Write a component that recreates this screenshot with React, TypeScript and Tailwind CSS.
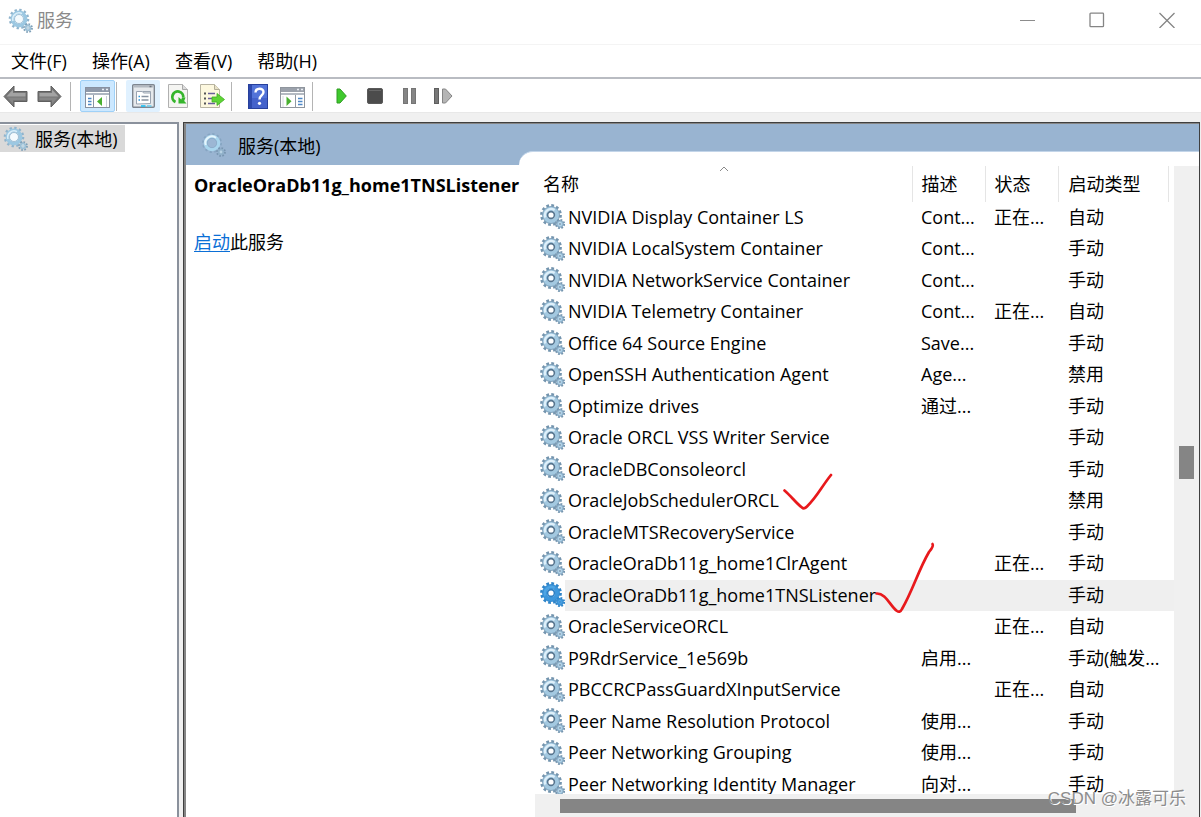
import React from 'react';

interface Service {
  name: string;
  description?: string;
  status?: string;
  startup: string;
  selected?: boolean;
}

const SERVICES: Service[] = [
  { name: 'NVIDIA Display Container LS', description: 'Cont...', status: '正在...', startup: '自动' },
  { name: 'NVIDIA LocalSystem Container', description: 'Cont...', startup: '手动' },
  { name: 'NVIDIA NetworkService Container', description: 'Cont...', startup: '手动' },
  { name: 'NVIDIA Telemetry Container', description: 'Cont...', status: '正在...', startup: '自动' },
  { name: 'Office 64 Source Engine', description: 'Save...', startup: '手动' },
  { name: 'OpenSSH Authentication Agent', description: 'Age...', startup: '禁用' },
  { name: 'Optimize drives', description: '通过...', startup: '手动' },
  { name: 'Oracle ORCL VSS Writer Service', startup: '手动' },
  { name: 'OracleDBConsoleorcl', startup: '手动' },
  { name: 'OracleJobSchedulerORCL', startup: '禁用' },
  { name: 'OracleMTSRecoveryService', startup: '手动' },
  { name: 'OracleOraDb11g_home1ClrAgent', status: '正在...', startup: '手动' },
  { name: 'OracleOraDb11g_home1TNSListener', startup: '手动', selected: true },
  { name: 'OracleServiceORCL', status: '正在...', startup: '自动' },
  { name: 'P9RdrService_1e569b', description: '启用...', startup: '手动(触发...' },
  { name: 'PBCCRCPassGuardXInputService', status: '正在...', startup: '自动' },
  { name: 'Peer Name Resolution Protocol', description: '使用...', startup: '手动' },
  { name: 'Peer Networking Grouping', description: '使用...', startup: '手动' },
  { name: 'Peer Networking Identity Manager', description: '向对...', startup: '手动' },
];

const MENUS = ['文件(F)', '操作(A)', '查看(V)', '帮助(H)'];

interface GearsProps {
  variant?: 'normal' | 'selected';
}

const GEAR_COLORS = {
  normal: { teeth: '#7394ae', ring: '#a3c9e1', edge: '#6d8ca6', light: '#dff0fa', hub: '#56758f', small: '#dff0fa' },
  selected: { teeth: '#2f84c8', ring: '#3d97dc', edge: '#2f84c8', light: '#4fa5e4', hub: '#2f7fc2', small: '#6db8ef' },
};

const Gears: React.FC<GearsProps> = ({ variant = 'normal' }) => {
  const c = GEAR_COLORS[variant];
  return (
    <svg width="25" height="25" viewBox="0 0 25 25" className="shrink-0" aria-hidden="true">
      <circle cx="11" cy="11" r="9.4" fill="none" stroke={c.teeth} strokeWidth="3" strokeDasharray="2.7 2.22" />
      <circle cx="11" cy="11" r="6.3" fill="none" stroke={c.ring} strokeWidth="4.8" />
      <circle cx="11" cy="11" r="8.5" fill="none" stroke={c.edge} strokeWidth="0.8" opacity="0.8" />
      <path d="M5.4 13.5A6.2 6.2 0 0 1 14.6 6" fill="none" stroke={c.light} strokeWidth="2.2" />
      <circle cx="11" cy="11" r="3.4" fill="#fff" stroke={c.hub} strokeWidth="1.6" />
      <circle cx="20" cy="20" r="4.1" fill="none" stroke={c.teeth} strokeWidth="2" strokeDasharray="1.8 1.42" />
      <circle cx="20" cy="20" r="2.4" fill={c.small} stroke={c.ring} strokeWidth="2" />
      <circle cx="20" cy="20" r="3.3" fill="none" stroke={c.edge} strokeWidth="0.6" />
      <circle cx="20" cy="20" r="0.9" fill={c.edge} />
    </svg>
  );
};

/* Toned down version used for the window caption and the console tree */
const SoftGears = () => (
  <svg width="25" height="25" viewBox="0 0 25 25" className="shrink-0" aria-hidden="true">
    <circle cx="11" cy="11" r="9" fill="none" stroke="#8fb3cc" strokeWidth="2.6" strokeDasharray="2.3 2.41" />
    <circle cx="11" cy="11" r="6.6" fill="none" stroke="#9cc8e2" strokeWidth="3.6" />
    <path d="M5 13A6.3 6.3 0 0 1 14 5.6" fill="none" stroke="#d9eef9" strokeWidth="1.6" />
    <circle cx="11" cy="11" r="4.5" fill="#f4fafd" stroke="#8eb4ce" strokeWidth="0.8" />
    <circle cx="20" cy="20" r="3.9" fill="none" stroke="#7fa0b8" strokeWidth="2" strokeDasharray="1.6 1.46" />
    <circle cx="20" cy="20" r="2.3" fill="#e8f4fa" stroke="#9dc0d6" strokeWidth="1.8" />
    <circle cx="20" cy="20" r="0.7" fill="#7fa0b8" />
  </svg>
);

/* Banner version, sits on the blue header */
const BannerGears = () => (
  <svg width="25" height="25" viewBox="0 0 25 25" className="shrink-0" aria-hidden="true">
    <circle cx="11" cy="10" r="9" fill="none" stroke="#86a5c2" strokeWidth="2" strokeDasharray="2.3 2.41" />
    <circle cx="11" cy="10" r="6.6" fill="none" stroke="#a9d6ee" strokeWidth="3.4" />
    <path d="M4.8 12A6.5 6.5 0 0 1 15 4.8" fill="none" stroke="#e6f6fd" strokeWidth="2" />
    <circle cx="11" cy="10" r="4.7" fill="#9cb7d4" stroke="#86a9c6" strokeWidth="0.7" />
    <circle cx="20" cy="19" r="3.9" fill="none" stroke="#7896b0" strokeWidth="2" strokeDasharray="1.6 1.46" />
    <circle cx="20" cy="19" r="2.2" fill="#b9d3e4" stroke="#8fb0c9" strokeWidth="1.6" />
  </svg>
);

const Arrow: React.FC<{ flip?: boolean }> = ({ flip }) => (
  <svg width="25" height="24" viewBox="0 0 25 24" className={flip ? '-scale-x-100' : ''} aria-hidden="true">
    <path d="M1 12.500 11 2v5.500h13v10H11V23Z" fill="#757575" stroke="#5f5f5f" strokeLinejoin="round" />
    <path d="M3.500 12.500 10 5.500V9h12.500v3.500z" fill="#a3a3a3" />
    <path d="M4.500 13.500H22.500V16H10v4Z" fill="#868686" />
  </svg>
);

const TreeIcon = () => (
  <svg width="25" height="24" viewBox="0 -3 25 24" aria-hidden="true">
    <rect x="0.5" y="0.5" width="24" height="20" fill="#fff" stroke="#8790a0" />
    <rect x="1" y="1" width="23" height="4" fill="#8f99aa" />
    <path d="M17 2.500h2M21 2.500h2" stroke="#e9edf2" strokeWidth="1.5" />
    <path d="M1 7h23" stroke="#aeb6c2" strokeWidth="2" />
    <path d="M8.500 8v13" stroke="#8a94a4" />
    <path d="M3 11.500h3.500M3 14.500h3.500M3 17.500h3.500" stroke="#4d87c7" strokeWidth="1.5" />
    <path d="M12 14.500 17 10v9Z" fill="#49b030" />
    <path d="M21.500 9v11" stroke="#c9d0da" />
  </svg>
);

const PropertiesIcon = () => (
  <svg width="23" height="24" viewBox="0 0 23 24" aria-hidden="true">
    <rect x="0.7" y="0.7" width="21.6" height="22.6" rx="1" fill="#e6e9ec" stroke="#7e8690" strokeWidth="1.4" />
    <path d="M1.500 2.500h20" stroke="#b3b9c1" strokeWidth="2" />
    <path d="M17.500 2.500h2" stroke="#6c747e" strokeWidth="1.5" />
    <path d="M4.500 20V7.500h6l1 1.500h7v10.500z" fill="#fff" stroke="#9aa4b1" />
    <path d="M11 7.500h7.500v2" fill="none" stroke="#9aa4b1" />
    <path d="M6.500 12.500h1.500M6.500 16h1.500" stroke="#2b94d6" strokeWidth="1.5" />
    <path d="M9.500 12.500h7M9.500 16h7" stroke="#8792a0" strokeWidth="1.3" />
    <path d="M9 22h4.500" stroke="#18bdf3" strokeWidth="1.6" />
    <path d="M15 22h4.500" stroke="#6ccbea" strokeWidth="1.6" />
  </svg>
);

const RefreshIcon = () => (
  <svg width="20" height="24" viewBox="0 0 20 24" aria-hidden="true">
    <path d="M0.500 0.500h14l5 5v18h-19Z" fill="#f5f5f2" stroke="#b0b0b0" />
    <path d="M14.500 0.500v5h5" fill="#dcdcdc" stroke="#a8a8a8" />
    <path d="M7.500 18A5.500 5.500 0 1 1 15.300 13.500" fill="none" stroke="#35b52b" strokeWidth="2.8" />
    <path d="M10.500 13v6.500H18.500L16.200 17 17.500 13.500H14L13.300 15.500Z" fill="#35b52b" />
  </svg>
);

const ExportIcon = () => (
  <svg width="25" height="24" viewBox="0 0 25 24" aria-hidden="true">
    <path d="M0.500 0.500h14l5 5v18h-19Z" fill="#fdf8df" stroke="#b8b4a2" />
    <path d="M14.500 0.500v5h5" fill="#e8e2c6" stroke="#b3ae98" />
    <path d="M4 9.500h2M4 14.500h2M4 19.500h2" stroke="#555" strokeWidth="1.8" />
    <path d="M8 9.500h7M8 14.500h4M8 19.500h7" stroke="#6a5f9c" strokeWidth="1.5" />
    <path d="M12 13h5V9.500l7.500 6-7.500 6V18h-5Z" fill="#5fd435" stroke="#3fae22" strokeWidth="0.8" />
  </svg>
);

const HelpIcon = () => (
  <svg width="20" height="25" viewBox="0 0 20 25" aria-hidden="true">
    <rect x="0.5" y="0.5" width="19" height="24" fill="#5273d8" stroke="#27409c" />
    <path d="M1 1h3v23H1z" fill="#2d49ad" />
    <path d="M4 14h15v10H4z" fill="#4462cb" />
    <path d="M7.500 8.500c0-5 8-5 8-.5 0 3.500-4 3.500-4 7.500" fill="none" stroke="#fff" strokeWidth="2.4" />
    <circle cx="11.5" cy="19.3" r="1.6" fill="#fff" />
  </svg>
);

const ActionPaneIcon = () => (
  <svg width="25" height="24" viewBox="0 -3 25 24" aria-hidden="true">
    <rect x="0.5" y="0.5" width="24" height="20" fill="#fff" stroke="#8f959d" />
    <rect x="1" y="1" width="23" height="4" fill="#9ba1ab" />
    <path d="M17 2.500h2M21 2.500h2" stroke="#e9edf2" strokeWidth="1.5" />
    <path d="M1 7h23" stroke="#b4bac2" strokeWidth="2" />
    <path d="M15.500 8v13" stroke="#9299a3" />
    <path d="M18 11.500h4.500M18 14.500h4.500M18 17.500h4.500" stroke="#4d87c7" strokeWidth="1.5" />
    <path d="M6.500 9.500v9.500l5-4.700Z" fill="#49b030" />
    <path d="M3 9v11" stroke="#d5dae1" />
  </svg>
);

const PlayIcon = () => (
  <svg width="11" height="16" viewBox="0 0 11 16" aria-hidden="true">
    <path d="M1 1h3l6.300 7-6.300 7H1Z" fill="#3fc92d" stroke="#2f9c22" strokeLinejoin="round" />
  </svg>
);

const StopIcon = () => (
  <svg width="16" height="16" viewBox="0 0 16 16" aria-hidden="true">
    <rect x="0.5" y="0.5" width="15" height="15" rx="1.5" fill="#4c4c4c" stroke="#5a5a5a" />
    <path d="M2 2.500h12" stroke="#686868" />
  </svg>
);

const PauseIcon = () => (
  <svg width="13" height="16" viewBox="0 0 13 16" aria-hidden="true">
    <rect x="0.5" y="0.5" width="4" height="15" fill="#858585" stroke="#757575" />
    <rect x="8.5" y="0.5" width="4" height="15" fill="#858585" stroke="#757575" />
  </svg>
);

const RestartIcon = () => (
  <svg width="19" height="16" viewBox="0 0 19 16" aria-hidden="true">
    <rect x="0.5" y="0.5" width="4" height="15" fill="#777" stroke="#5e5e5e" />
    <path d="M8.500 1h3l6.500 7-6.500 7h-3Z" fill="#b5b5b5" stroke="#858585" strokeLinejoin="round" />
  </svg>
);

const Separator = () => <div className="h-[29px] w-px shrink-0 bg-[#b4b4b4]" />;

interface ToolButtonProps {
  label: string;
  className?: string;
  children: React.ReactNode;
}

const ToolButton: React.FC<ToolButtonProps> = ({ label, className = 'w-[35px]', children }) => (
  <button aria-label={label} className={`flex h-8 shrink-0 items-center justify-center ${className}`}>
    {children}
  </button>
);

const TitleBar = () => (
  <header className="flex h-[45px] shrink-0 items-center border-b border-[#f4f4f4] pb-1 pl-2">
    <SoftGears />
    <h1 className="ml-1 flex-1 text-[#8a8a8a]">服务</h1>
    <button aria-label="最小化" className="flex h-10 w-[69px] items-center justify-center">
      <svg width="16" height="16" viewBox="0 0 16 16"><path d="M0 8.500h15" stroke="#8c8c8c" /></svg>
    </button>
    <button aria-label="最大化" className="flex h-10 w-[70px] items-center justify-center">
      <svg width="16" height="16" viewBox="0 0 16 16">
        <rect x="1" y="1.2" width="13.5" height="13.5" rx="0.8" fill="none" stroke="#858585" strokeWidth="1.3" />
      </svg>
    </button>
    <button aria-label="关闭" className="flex h-10 w-[69px] items-center justify-center">
      <svg width="16" height="16" viewBox="0 0 16 16"><path d="M.5 1l15 15M15.500 1l-15 15" stroke="#858585" strokeWidth="1.3" /></svg>
    </button>
  </header>
);

const Toolbar = () => (
  <div role="toolbar" className="flex h-[34px] shrink-0 items-center border-b border-[#e8e8e8] pt-px">
    <div className="mr-[5px] flex gap-[3px]">
      <ToolButton label="后退" className="w-[31px]"><Arrow /></ToolButton>
      <ToolButton label="前进" className="w-[31px]"><Arrow flip /></ToolButton>
    </div>
    <Separator />
    <ToolButton label="显示/隐藏控制台树" className="ml-[9px] mr-px w-[35px] rounded-xs border border-[#9fd1f8] bg-[#cce8ff]">
      <TreeIcon />
    </ToolButton>
    <Separator />
    <div className="ml-[9px] mr-px flex">
      <ToolButton label="属性" className="w-[34px] rounded-xs bg-[#e0f1ff]"><PropertiesIcon /></ToolButton>
      <ToolButton label="刷新"><RefreshIcon /></ToolButton>
      <ToolButton label="导出列表"><ExportIcon /></ToolButton>
    </div>
    <Separator />
    <div className="ml-2 mr-0.5 flex">
      <ToolButton label="帮助"><HelpIcon /></ToolButton>
      <ToolButton label="显示/隐藏操作窗格"><ActionPaneIcon /></ToolButton>
    </div>
    <Separator />
    <div className="ml-[11px] flex">
      <ToolButton label="启动服务" className="w-[34px]"><PlayIcon /></ToolButton>
      <ToolButton label="停止服务" className="w-[34px]"><StopIcon /></ToolButton>
      <ToolButton label="暂停服务" className="w-[34px]"><PauseIcon /></ToolButton>
      <ToolButton label="重启动服务" className="w-[34px]"><RestartIcon /></ToolButton>
    </div>
  </div>
);

const ServiceRow: React.FC<{ service: Service }> = ({ service }) => {
  const fill = service.selected ? 'bg-[#efefef]' : '';
  return (
    <tr className="h-8 odd:h-[31px]">
      <td className="p-0">
        <div className="flex h-[31px] items-center pl-[5px]">
          <span className="shrink-0 pb-0.5">
            <Gears variant={service.selected ? 'selected' : 'normal'} />
          </span>
          <span className={`flex h-full flex-1 items-center pb-0.5 pl-[3px] ${fill}`}>{service.name}</span>
        </div>
      </td>
      <td className={`p-0 pb-0.5 pl-[9px] ${fill}`}>{service.description}</td>
      <td className={`p-0 pb-0.5 pl-[9px] ${fill}`}>{service.status}</td>
      <td className={`p-0 pb-0.5 pl-[10px] ${fill}`}>{service.startup}</td>
      <td className={`p-0 ${fill}`} />
    </tr>
  );
};

const ServiceTable = () => (
  <div className="relative min-h-0 min-w-0 flex-1 overflow-hidden">
    <table className="w-full table-fixed border-collapse whitespace-nowrap text-left leading-6">
      <colgroup>
        <col />
        <col className="w-[73px]" />
        <col className="w-[73px]" />
        <col className="w-[110px]" />
        <col className="w-[6px]" />
      </colgroup>
      <thead>
        <tr className="h-9">
          <th className="relative border-r border-[#e5e5e5] p-0 pl-2 font-normal">
            名称
            <svg width="10" height="6" viewBox="0 0 10 6" className="absolute left-1/2 top-0 -ml-1" aria-hidden="true">
              <path d="M1 5l4-4 4 4" fill="none" stroke="#8a8a8a" />
            </svg>
          </th>
          <th className="border-r border-[#e5e5e5] p-0 pl-[9px] font-normal">描述</th>
          <th className="border-r border-[#e5e5e5] p-0 pl-[9px] font-normal">状态</th>
          <th className="border-r border-[#e5e5e5] p-0 pl-[10px] font-normal">启动类型</th>
          <th className="p-0" />
        </tr>
      </thead>
      <tbody>
        {SERVICES.map((service) => (
          <ServiceRow key={service.name} service={service} />
        ))}
      </tbody>
    </table>

    {/* Hand-drawn ticks over the two Oracle services */}
    <svg
      width="410"
      height="460"
      viewBox="0 0 410 460"
      className="pointer-events-none absolute left-0 top-0"
      fill="none"
      stroke="#e8191c"
      strokeWidth="2.7"
      strokeLinecap="round"
      strokeLinejoin="round"
      aria-hidden="true"
    >
      <path d="M249.500 324.500C256 330 261 337 267 341.500Q269 343.500 272 340.500C282 331 287 320 296 309" />
      <path d="M341.500 427.500C351 427 355 440 362 445Q365 447 367 443C378 424 383 405 394 386Q399 380 397.500 378" />
    </svg>
  </div>
);

const DetailPane = () => (
  <section className="flex min-w-0 flex-1 border border-b-0 border-[#3f3f3f] bg-white">
    <div className="flex min-w-0 flex-1 border-l-2 border-t border-[#858585] bg-[#99b4d1]">
      <div className="relative z-10 flex w-[333px] shrink-0 flex-col">
        <div className="flex h-[41px] shrink-0 items-center pl-[15px] pt-0.5">
          <BannerGears />
          <h2 className="ml-3">服务(本地)</h2>
        </div>
        <div className="flex-1 whitespace-nowrap bg-white px-2 pt-2">
          <h3 className="font-bold leading-6">OracleOraDb11g_home1TNSListener</h3>
          <p className="mt-[33px] leading-6">
            <a href="#start" className="text-[#0b6fd6] underline underline-offset-2">启动</a>此服务
          </p>
        </div>
      </div>

      <div className="mt-[27px] flex min-w-0 flex-1 rounded-tl-[14px] border-t border-[#c3d5e9] bg-white pl-4 pt-[14px]">
        <div className="flex min-w-0 flex-1 flex-col">
          <ServiceTable />
          <div className="flex h-[23px] shrink-0 items-start bg-[#f0f0f0] pl-[25px] pt-[5px]">
            <div className="h-[14px] w-[84%] bg-[#858585]" />
          </div>
        </div>
        <div className="flex w-[25px] shrink-0 justify-center bg-[#f0f0f0] pt-[280px]">
          <div className="h-[33px] w-[15px] bg-[#858585]" />
        </div>
      </div>
    </div>
  </section>
);

export default function App() {
  return (
    <div className="relative flex h-screen flex-col overflow-hidden bg-white font-['Open_Sans','Noto_Sans_CJK_SC',sans-serif] text-[18px] leading-6 text-black">
      <TitleBar />
      <nav className="flex h-[34px] shrink-0 items-center gap-[25px] border-b-2 border-[#b9bcc2] pl-[11px]">
        {MENUS.map((menu) => (
          <button key={menu}>{menu}</button>
        ))}
      </nav>
      <Toolbar />

      <main className="flex min-h-0 flex-1 gap-1 bg-[#f0f0f0] pr-px pt-[9px]">
        <aside className="w-[179px] shrink-0 border-r-2 border-t-2 border-[#8a919c] bg-white">
          <button className="mt-px flex h-[27px] w-[125px] items-center bg-[#d9d9d9] pl-[3px]">
            <SoftGears />
            <span className="ml-[7px] whitespace-nowrap">服务(本地)</span>
          </button>
        </aside>
        <DetailPane />
      </main>

      <div className="pointer-events-none absolute bottom-1.5 right-[15px] z-20 font-['Liberation_Sans','Noto_Sans_CJK_SC',sans-serif] text-[17px] text-[#8d8d8d] [text-shadow:1px_1px_0_#fff]">
        CSDN @冰露可乐
      </div>
    </div>
  );
}
